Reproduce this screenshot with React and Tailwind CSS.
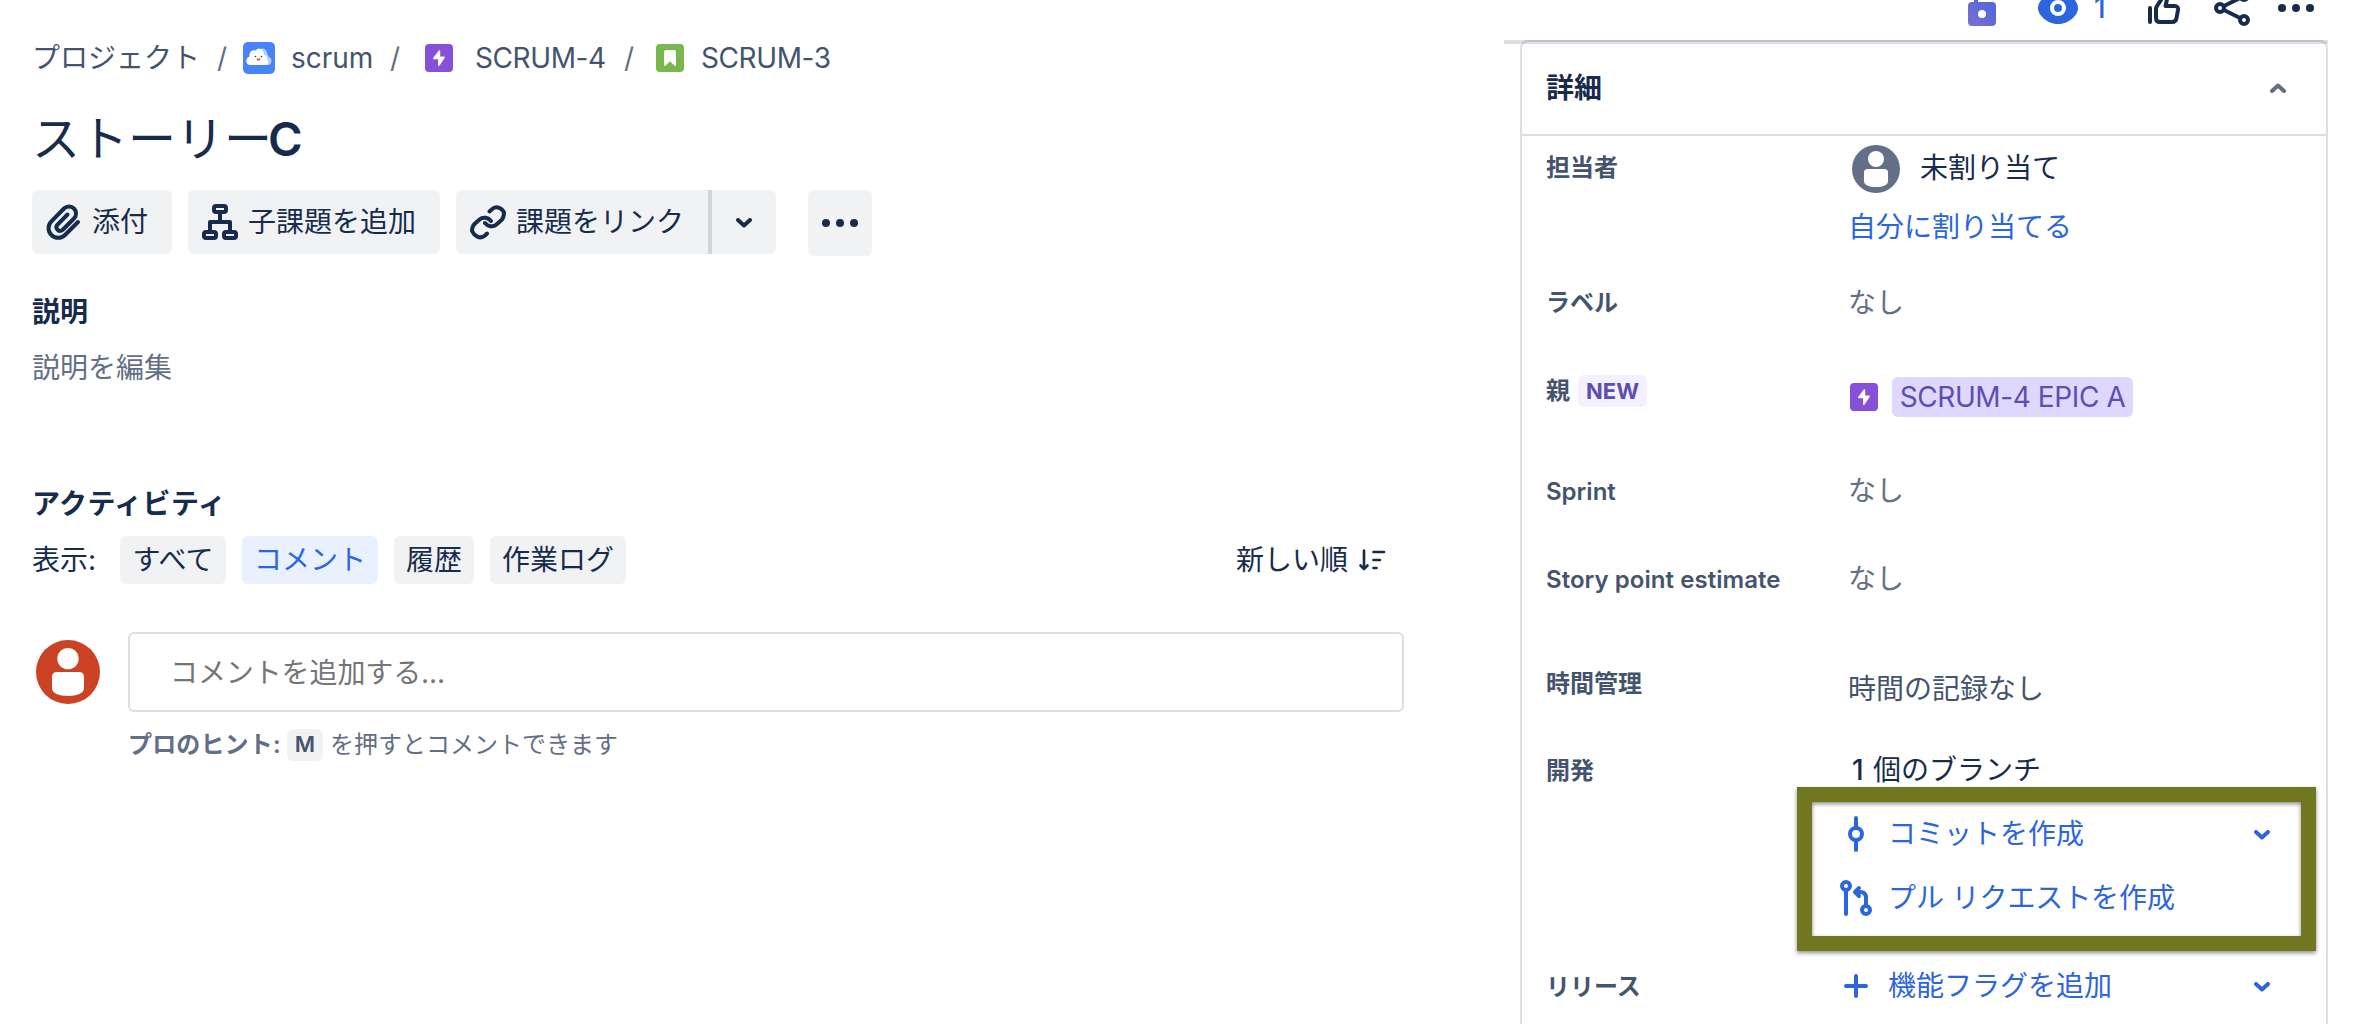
const JP = "font-['Inter','Noto_Sans_CJK_JP',sans-serif]";

function Epic() {
  return (
    <svg viewBox="0 0 28 28" className="h-7 w-7 shrink-0">
      <rect width="28" height="28" rx="4" fill="#8750D9" />
      <path d="M13.800 6.600 8.300 13.700c-.5.8-.2 1.500.6 1.500h4.200v5.900c0 1.100.9 1.400 1.500.5l5-7.600c.5-.8.2-1.500-.6-1.500h-3.800V7.100c0-1-.9-1.300-1.400-.5Z" fill="#fff" />
    </svg>
  );
}

function Story() {
  return (
    <svg viewBox="0 0 28 28" className="h-7 w-7 shrink-0">
      <rect width="28" height="28" rx="4" fill="#7AB84E" />
      <path d="M10 6h8a2 2 0 0 1 2 2v13c0 1-.8 1.300-1.400.7L14 17.200l-4.600 4.500c-.6.6-1.400.3-1.400-.7V8a2 2 0 0 1 2-2Z" fill="#fff" />
    </svg>
  );
}

function Cloud() {
  return (
    <svg viewBox="0 0 32 32" className="h-8 w-8 shrink-0">
      <rect width="32" height="32" rx="5" fill="#4784F7" />
      <path d="M15 9c1-3 8-4 9 2 1 2 1 3 2 4 4 1 3 8-1 8H15Z" fill="#B5D0FB" />
      <path d="M7.500 23C2 23 2 16 6.500 14.500 6.200 9 10 7.500 12.500 8.500c3-3.500 8.500-1.500 8.500 4.500 3 0 3.500 3 3 4 2 1.500 1.500 6-1 6Z" fill="#fff" />
      <circle cx="12.500" cy="14.500" r=".8" fill="#253858" />
      <circle cx="18.500" cy="14.500" r=".8" fill="#253858" />
      <path d="M13.500 16.500h4c0 3-4 3-4 0Z" fill="#F2533A" />
    </svg>
  );
}

function Chevron({ up, className = "" }) {
  return (
    <svg viewBox="0 0 16 10" className={"h-[10px] w-4 shrink-0 " + className}>
      <path d={up ? "M2 8l6-5.500L14 8" : "M2 2l6 5.500L14 2"} fill="none" stroke="currentColor" strokeWidth="4" strokeLinecap="round" strokeLinejoin="round" />
    </svg>
  );
}

function Dots() {
  return (
    <svg viewBox="0 0 36 8" className="h-2 w-9" fill="currentColor">
      <circle cx="4" cy="4" r="4" /><circle cx="18" cy="4" r="4" /><circle cx="32" cy="4" r="4" />
    </svg>
  );
}

function Person({ className, color }) {
  return (
    <svg viewBox="0 0 48 48" className={"shrink-0 " + className}>
      <circle cx="24" cy="24" r="24" fill={color} />
      <circle cx="24" cy="14" r="8" fill="#fff" />
      <path d="M15.500 24h17a3.500 3.500 0 0 1 3.500 3.500V36c0 4-5 6-12 6s-12-2-12-6v-8.500a3.500 3.500 0 0 1 3.500-3.500Z" fill="#fff" />
    </svg>
  );
}

function TopIcons() {
  return (
    <svg viewBox="1960 0 360 30" className="ml-auto h-[30px] w-[360px] shrink-0">
      <defs>
        <linearGradient id="lock" x1="0" y1="1" x2="1" y2="0">
          <stop offset="0" stopColor="#7F6DD3" />
          <stop offset="1" stopColor="#4666DC" />
        </linearGradient>
      </defs>
      <path d="M1974-4h4v6h14a4 4 0 0 1 4 4v16a4 4 0 0 1-4 4h-20a4 4 0 0 1-4-4V6a4 4 0 0 1 4-4h2Z" fill="url(#lock)" />
      <circle cx="1982" cy="14" r="4" fill="#fff" />
      <path d="M2058-8c10 0 20 8 20 16s-10 16-20 16-20-8-20-16 10-16 20-16Z" fill="#2C66DD" />
      <circle cx="2058" cy="8" r="6" fill="#2C66DD" stroke="#fff" strokeWidth="4" />
      <text x="2094" y="18" fill="#2C66DD" fontSize="28" fontWeight="500" fontFamily="Inter">1</text>
      <g fill="none" stroke="#172B4D" strokeWidth="4" strokeLinecap="round" strokeLinejoin="round">
        <path d="M2150 8v14" />
        <path d="M2165-6l-8 12q-1 1.500-1 3v9q0 4 4 4h12q4 0 4.500-4l1.500-8q.5-4-3.500-4h-9l2-9" />
        <path d="M2220 8l24-12M2220 8l24 12" />
        <circle cx="2220" cy="8" r="4" fill="#fff" />
        <circle cx="2244" cy="20" r="4" fill="#fff" />
        <circle cx="2244" cy="-4" r="4" fill="#fff" />
      </g>
      <g fill="#172B4D">
        <circle cx="2282" cy="8" r="4" /><circle cx="2296" cy="8" r="4" /><circle cx="2310" cy="8" r="4" />
      </g>
    </svg>
  );
}

function Row({ h, label, labelTop = "", children }) {
  return (
    <div className={"grid shrink-0 grid-cols-[302px_1fr] pl-6 " + h}>
      <div className={"flex h-10 items-center text-2xl leading-10 font-semibold text-[#44546F] " + labelTop}>{label}</div>
      <div className="min-w-0">{children}</div>
    </div>
  );
}

function None() {
  return <div className="mt-px text-[#626F86]">なし</div>;
}

function DevLink({ icon, text, chevron, className = "" }) {
  return (
    <div className={"flex h-10 items-center text-[#2C66DD] " + className}>
      <div className="-ml-[10px] flex w-9 justify-center">{icon}</div>
      <span className="ml-[14px]">{text}</span>
      {chevron && <Chevron className="mt-[2px] mr-[56px] ml-auto" />}
    </div>
  );
}

export default function App() {
  return (
    <div className={"flex h-[1024px] w-[2354px] overflow-hidden bg-white text-[28px] leading-10 whitespace-nowrap text-[#172B4D] " + JP}>
      <main className="w-[1504px] shrink-0 pl-8">
        <nav className="mt-[34px] flex h-12 items-center text-[#44546F]">
          <span className="w-[185px]">プロジェクト</span>
          <span className="w-[26px] text-[#626F86]">/</span>
          <Cloud />
          <span className="ml-4 w-[99px]">scrum</span>
          <span className="w-[35px] text-[#626F86]">/</span>
          <Epic />
          <span className="ml-[22px] w-[149px] tracking-[-0.4px]">SCRUM-4</span>
          <span className="w-[32px] text-[#626F86]">/</span>
          <Story />
          <span className="ml-[17px] tracking-[-0.4px]">SCRUM-3</span>
        </nav>
        <h1 className="mt-[27px] h-[60px] text-5xl leading-[60px] font-normal">ストーリー<span className="-ml-1 text-[47px] font-semibold">C</span></h1>
        <div className="mt-[21px] flex h-[66px] items-start">
          <button className="flex h-16 w-[140px] items-center rounded-md bg-[#F1F2F4] pl-[14px]">
            <svg viewBox="0 0 36 36" className="h-9 w-9" fill="none" stroke="currentColor" strokeWidth="4" strokeLinecap="round" strokeLinejoin="round">
              <path d="M32 18 19 31a9.600 9.600 0 0 1-13.600-13.600L18 4.500a7 7 0 0 1 10 10L16.500 26a3.700 3.700 0 0 1-5.200-5.200L21.500 10.500" />
            </svg>
            <span className="ml-[10px]">添付</span>
          </button>
          <button className="ml-4 flex h-16 w-[252px] items-center rounded-md bg-[#F1F2F4] pl-[14px]">
            <svg viewBox="0 0 36 36" className="h-9 w-9" fill="none" stroke="currentColor" strokeWidth="4" strokeLinejoin="round">
              <rect x="12" y="2" width="12" height="6" rx="2" />
              <rect x="2" y="28" width="12" height="6" rx="2" />
              <rect x="22" y="28" width="12" height="6" rx="2" />
              <path d="M18 8v10M8 28V18h20v10" />
            </svg>
            <span className="ml-[10px]">子課題を追加</span>
          </button>
          <div className="ml-4 flex h-16 w-[320px] overflow-hidden rounded-md bg-[#F1F2F4]">
            <button className="flex w-[252px] items-center pl-[14px]">
              <svg viewBox="0 0 36 36" className="h-9 w-9" fill="none" stroke="currentColor" strokeWidth="4" strokeLinecap="round" strokeLinejoin="round">
                <path d="M19.500 7.500l2.500-2.300c5-4.700 11 .3 12 3.300 0 4-.5 5.500-2.500 7.500l-5 4.500c-4 3.500-9 1.500-11.500-1.500" />
                <path d="M17 29.500l-2 2c-5 4.500-11 0-13-4.500 0-3.500.5-5 2.500-7l5-4.500c4-3.500 9-1.500 11.500 1.500" />
              </svg>
              <span className="ml-[10px]">課題をリンク</span>
            </button>
            <div className="w-1 bg-[#D1D3DC]" />
            <button className="flex w-16 items-center justify-center pt-[2px]"><Chevron /></button>
          </div>
          <button className="ml-8 flex h-[66px] w-16 items-center justify-center rounded-md bg-[#F1F2F4]"><Dots /></button>
        </div>
        <h2 className="mt-9 h-10 font-bold">説明</h2>
        <p className="mt-4 h-10 text-[#626F86]">説明を編集</p>
        <h2 className="mt-24 h-10 font-bold tracking-[0.4px]">アクティビティ</h2>
        <div className="mt-3 flex h-12 w-[1372px] items-center">
          <span className="w-[88px]">表示:</span>
          <button className="h-12 w-[106px] rounded-md bg-[#F1F2F4]">すべて</button>
          <button className="ml-4 h-12 w-[136px] rounded-md bg-[#E9F0FE] text-[#2C66DD]">コメント</button>
          <button className="ml-4 h-12 w-20 rounded-md bg-[#F1F2F4]">履歴</button>
          <button className="ml-4 h-12 w-[136px] rounded-md bg-[#F1F2F4]">作業ログ</button>
          <span className="ml-auto">新しい順</span>
          <svg viewBox="0 0 28 24" className="mr-[18px] ml-[10px] h-6 w-7" fill="none" stroke="currentColor" strokeWidth="2.600" strokeLinecap="round" strokeLinejoin="round">
            <path d="M6 2.500V20" />
            <path d="M2.500 17.500 6 21l3.500-3.500" />
            <path d="M15.500 4H26M15.500 12h6.500M15.500 20h3" />
          </svg>
        </div>
        <div className="mt-12 flex h-20">
          <Person color="#CB4224" className="mt-2 ml-1 h-16 w-16" />
          <div className="ml-7 flex w-[1276px] items-center rounded-md border-2 border-[#DDDEE5] pt-[2px] pl-10 tracking-[-0.1px] text-[#757575]">コメントを追加する...</div>
        </div>
        <div className="mt-[17px] ml-24 flex h-8 items-center text-2xl text-[#626F86]">
          <strong className="w-[159px] font-semibold tracking-[0.15px]">プロのヒント:</strong>
          <kbd className="flex h-8 w-9 items-center justify-center rounded-md bg-[#F1F2F4] font-['Inter'] text-[22px] font-semibold text-[#44546F]">M</kbd>
          <span className="ml-[7px]">を押すとコメントできます</span>
        </div>
      </main>

      <aside className="flex w-[824px] shrink-0 flex-col">
        <div className="flex h-10 w-[816px] shrink-0"><TopIcons /></div>
        <div className="-mb-1 h-1 shrink-0 bg-[#091E42]/14" />
        <section className="relative ml-4 flex h-[1000px] w-[808px] shrink-0 flex-col rounded-t-lg border-2 border-[#091E42]/14">
          <header className="flex h-[94px] shrink-0 items-center border-b-2 border-[#DDDEE5] pr-10 pl-6">
            <h2 className="font-bold">詳細</h2>
            <Chevron up className="ml-auto text-[#626F86]" />
          </header>
          <Row h="h-[146px]" label="担当者" labelTop="mt-3">
            <div className="ml-[4px] flex pt-[9px]">
              <Person color="#626F86" className="h-12 w-12" />
              <span className="mt-[3px] ml-5">未割り当て</span>
            </div>
            <div className="mt-[14px] text-[#2C66DD]">自分に割り当てる</div>
          </Row>
          <Row h="h-[88px]" label="ラベル" labelTop="mt-px"><None /></Row>
          <Row
            h="h-[100px]"
            labelTop="mt-px"
            label={<>親<span className="ml-2 flex h-8 w-[69px] items-center justify-center rounded-md bg-[#F3F0FF] text-[22px] font-bold text-[#5E4DB2]">NEW</span></>}
          >
            <div className="mt-[7px] ml-[2px] flex h-10 items-center">
              <Epic />
              <span className="ml-[14px] flex h-10 w-[241px] items-center justify-center rounded-md bg-[#DFD8FD] tracking-[-0.4px] text-[#5E4DB2]">SCRUM-4 EPIC A</span>
            </div>
          </Row>
          <Row h="h-[88px]" label="Sprint" labelTop="mt-[2px]"><None /></Row>
          <Row h="h-[104px]" label={<span className="tracking-[0.05px]">Story point estimate</span>} labelTop="mt-[2px]"><None /></Row>
          <Row h="h-[88px]" label="時間管理" labelTop="mt-[2px]"><div className="mt-[7px] text-[#44546F]">時間の記録なし</div></Row>
          <Row h="h-[216px]" label="開発" labelTop="mt-px">
            <div className="ml-[4px] flex h-10"><span className="w-[21px] font-medium">1</span>個のブランチ</div>
            <DevLink
              className="mt-6"
              chevron
              text="コミットを作成"
              icon={
                <svg viewBox="0 0 16 36" className="h-9 w-4" fill="none" stroke="currentColor" strokeWidth="4" strokeLinecap="round">
                  <circle cx="8" cy="18" r="6" /><path d="M8 2v10M8 24v10" />
                </svg>
              }
            />
            <DevLink
              className="mt-6 tracking-[-0.1px]"
              text="プル リクエストを作成"
              icon={
                <svg viewBox="0 0 32 36" className="h-9 w-8" fill="none" stroke="currentColor" strokeWidth="4" strokeLinecap="round" strokeLinejoin="round">
                  <circle cx="6" cy="6" r="4" /><path d="M6 10v24" />
                  <circle cx="26" cy="30" r="4" /><path d="M26 26V18q0-6-6-6h-4M19 8l-4 4 4 4" />
                </svg>
              }
            />
          </Row>
          <Row h="h-[58px]" label="リリース" labelTop="mt-px">
            <DevLink
              chevron
              text="機能フラグを追加"
              icon={
                <svg viewBox="0 0 24 24" className="h-6 w-6" fill="none" stroke="currentColor" strokeWidth="4" strokeLinecap="round">
                  <path d="M12 2v20M2 12h20" />
                </svg>
              }
            />
          </Row>
          <div className="pointer-events-none absolute top-[745px] left-[275px] h-[164px] w-[519px] border-[15px] border-[#717621] drop-shadow-[0_2px_2px_rgba(0,0,0,0.45)]" />
        </section>
      </aside>
    </div>
  );
}
